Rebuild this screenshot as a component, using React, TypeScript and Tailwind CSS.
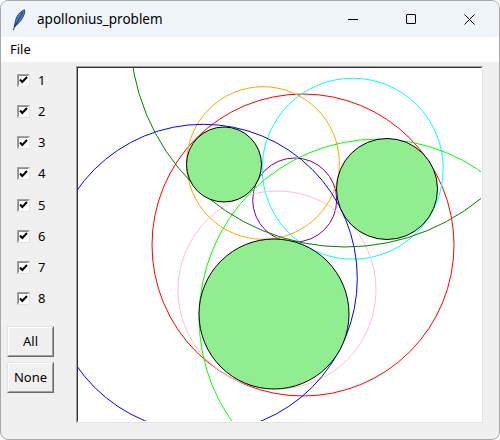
import React from 'react';

// Three given circles (filled) and the eight Apollonius solutions, in window pixels.
const GIVEN = [
  { cx: 224, cy: 164.5, r: 37.5 },
  { cx: 387, cy: 189, r: 50.5 },
  { cx: 274, cy: 314, r: 75 },
];

const SOLUTIONS = [
  { cx: 303, cy: 245, r: 151, color: 'red' },
  { cx: 294.7, cy: 200, r: 42, color: 'purple' },
  { cx: 263, cy: 163, r: 76.3, color: 'orange' },
  { cx: 352.7, cy: 168.7, r: 90.5, color: 'cyan' },
  { cx: 277, cy: 290, r: 99, color: 'pink' },
  { cx: 203.3, cy: 278.3, r: 154, color: 'blue' },
  { cx: 378.1, cy: 318.1, r: 179, color: 'lime' },
  { cx: 345, cy: 32, r: 215, color: 'green' },
];

const FONT = { fontFamily: '"Noto Sans", "Liberation Sans", sans-serif' };

function Feather() {
  return (
    <svg width="14" height="22" viewBox="0 0 14 22">
      <path d="M12.5 0.8 C 8 2.5, 4 7, 3 14 L 2.2 18 C 5 16, 9 12, 11 8 C 12.5 5, 13 3, 12.5 0.8 Z" fill="#4f7fc4" stroke="#1f3558" strokeWidth="0.9" />
      <path d="M11 3 C 8 8, 5 13, 1.2 21" fill="none" stroke="#1f3558" strokeWidth="1" />
    </svg>
  );
}

function Check() {
  return (
    <div className="w-[13px] h-[13px] border border-t-[#a0a0a0] border-l-[#a0a0a0] border-b-[#e3e3e3] border-r-[#e3e3e3]">
      <div className="w-full h-full bg-white border border-t-[#8a8a8a] border-l-[#8a8a8a] border-b-white border-r-white flex items-center justify-center">
        <svg width="9" height="8" viewBox="0 0 9 8">
          <path d="M1 3.5 L3.3 6 L8 1" fill="none" stroke="black" strokeWidth="2" />
        </svg>
      </div>
    </div>
  );
}

function TkButton({ label }: { label: string }) {
  return (
    <div className="w-[47px] h-[31px] border border-t-[#e3e3e3] border-l-[#e3e3e3] border-b-[#696969] border-r-[#696969]">
      <div className="w-full h-full border border-t-white border-l-white border-b-[#a0a0a0] border-r-[#a0a0a0] flex items-center justify-center text-[13px] text-black bg-[#f0f0f0]">
        {label}
      </div>
    </div>
  );
}

export default function App() {
  return (
    <div className="w-[500px] h-[440px] bg-white">
      <div className="w-[500px] h-[440px] box-border rounded-[8px] border border-[#a9a9a9] overflow-hidden bg-[#f0f0f0] flex flex-col" style={FONT}>
        {/* Title bar */}
        <div className="h-[36px] bg-[#eff4f9] flex items-center shrink-0">
          <div className="ml-[11px] mt-[1px]">
            <Feather />
          </div>
          <span className="ml-[11px] text-[13.5px] text-black">apollonius_problem</span>
          <div className="ml-auto flex items-center h-full">
            <div className="w-[58px] flex justify-center">
              <div className="w-[10px] h-px bg-black" />
            </div>
            <div className="w-[58px] flex justify-center">
              <div className="w-[10px] h-[10px] border border-black rounded-[1px]" />
            </div>
            <div className="w-[58px] flex justify-center mr-[1px]">
              <svg width="11" height="11" viewBox="0 0 11 11">
                <path d="M0.5 0.5 L10.5 10.5 M10.5 0.5 L0.5 10.5" stroke="black" strokeWidth="1" />
              </svg>
            </div>
          </div>
        </div>

        {/* Menu bar */}
        <div className="h-[25px] bg-white flex items-center shrink-0">
          <span className="ml-[9px] text-[13px] text-black">File</span>
        </div>

        {/* Body */}
        <div className="flex flex-1 min-h-0">
          <div className="w-[75px] shrink-0 flex flex-col">
            <div className="pt-[2.4px] pl-[16px] flex flex-col">
              {[1, 2, 3, 4, 5, 6, 7, 8].map(n => (
                <div key={n} className="h-[31.25px] flex items-center gap-[8px]">
                  <Check />
                  <span className="text-[13px] text-black leading-none">{n}</span>
                </div>
              ))}
            </div>
            <div className="mt-[12px] ml-[6px] flex flex-col gap-[5px]">
              <TkButton label="All" />
              <TkButton label="None" />
            </div>
          </div>

          {/* Canvas */}
          <div className="mt-[4px] w-[407px] h-[357px] border border-t-[#a0a0a0] border-l-[#a0a0a0] border-b-[#e3e3e3] border-r-[#e3e3e3]">
            <div className="w-full h-full bg-white border border-t-[#303030] border-l-[#303030] border-b-white border-r-white overflow-hidden">
              <svg width="403" height="353" viewBox="78 68 403 353" className="block">
                {SOLUTIONS.map(c => (
                  <circle key={c.color} cx={c.cx} cy={c.cy} r={c.r} fill="none" stroke={c.color} strokeWidth="1" />
                ))}
                {GIVEN.map((c, i) => (
                  <circle key={i} cx={c.cx} cy={c.cy} r={c.r} fill="#90ee90" stroke="black" strokeWidth="1" />
                ))}
              </svg>
            </div>
          </div>
        </div>
      </div>
    </div>
  );
}
